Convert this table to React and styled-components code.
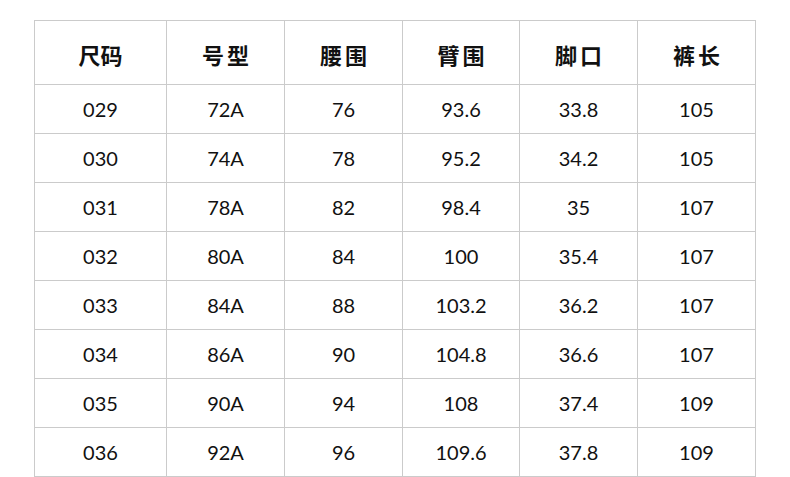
import React from 'react';
import styled, { createGlobalStyle } from 'styled-components';

const GlobalStyle = createGlobalStyle`
  body {
    margin: 0;
    background: #fff;
    font-family: Lato, "Noto Sans CJK SC", sans-serif;
  }
`;

const Page = styled.div`
  padding: 20px 0 0 34px;
`;

const Table = styled.table`
  border-collapse: collapse;
  table-layout: fixed;
  width: 722px;
  color: #111;
`;

const Th = styled.th`
  height: 61px;
  border: 1px solid #cbcbcb;
  font-family: "Noto Sans CJK SC", sans-serif;
  font-size: 22px;
  font-weight: 700;
  line-height: 1;
  letter-spacing: ${(p) => (p.$tight ? '0' : '3px')};
  text-indent: ${(p) => (p.$tight ? '0' : '3px')};
  text-align: center;
  padding: 2px 0 0;
`;

const Td = styled.td`
  height: 47px;
  border: 1px solid #cbcbcb;
  font-size: 20px;
  line-height: 1;
  text-align: center;
  padding: 0 0 1px;
`;

const widths = [132, 118, 118, 117, 118, 118];
const headers = ['尺码', '号型', '腰围', '臂围', '脚口', '裤长'];

const rows = [
  ['029', '72A', '76', '93.6', '33.8', '105'],
  ['030', '74A', '78', '95.2', '34.2', '105'],
  ['031', '78A', '82', '98.4', '35', '107'],
  ['032', '80A', '84', '100', '35.4', '107'],
  ['033', '84A', '88', '103.2', '36.2', '107'],
  ['034', '86A', '90', '104.8', '36.6', '107'],
  ['035', '90A', '94', '108', '37.4', '109'],
  ['036', '92A', '96', '109.6', '37.8', '109'],
];

export default function App() {
  return (
    <Page>
      <GlobalStyle />
      <Table>
        <colgroup>
          {widths.map((w, i) => (
            <col key={i} style={{ width: w }} />
          ))}
        </colgroup>
        <thead>
          <tr>
            {headers.map((h, i) => (
              <Th key={h} $tight={i === 0}>{h}</Th>
            ))}
          </tr>
        </thead>
        <tbody>
          {rows.map((r) => (
            <tr key={r[0]}>
              {r.map((c, i) => (
                <Td key={i}>{c}</Td>
              ))}
            </tr>
          ))}
        </tbody>
      </Table>
    </Page>
  );
}
